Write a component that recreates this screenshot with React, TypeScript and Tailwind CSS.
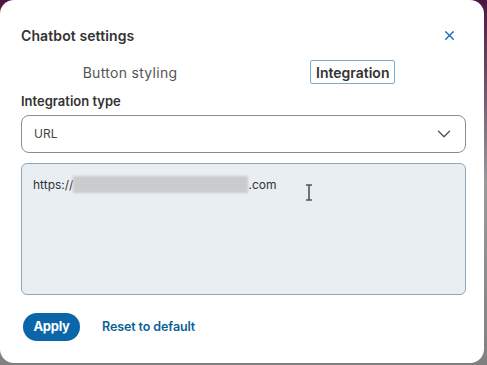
import { ChevronDown, X } from "lucide-react";

const App = () => {
  return (
    <div
      className="w-[487px] h-[365px] bg-gradient-to-b from-[#4b1442] via-[#9a9a9a] to-[#808080] overflow-hidden"
      style={{ fontFamily: "Inter, 'Liberation Sans', sans-serif" }}
    >
      <div className="w-[484px] h-[363px] rounded-[14px] bg-white pl-[21px] pr-[21px] pt-[26px] flex flex-col">
        {/* Header */}
        <div className="flex items-center justify-between h-[18px]">
          <h2 className="text-[14px] font-semibold text-[#333333] tracking-[0.1px]">Chatbot settings</h2>
          <X className="w-[15px] h-[15px] text-[#0a66c2] mr-[6px]" strokeWidth={2} />
        </div>

        {/* Tabs */}
        <div className="flex items-center mt-[16px] h-[24px]">
          <div className="w-[218px] flex justify-center">
            <span className="text-[14px] text-[#555555] tracking-[0.3px]">Button styling</span>
          </div>
          <div className="ml-[71px] h-[24px] px-[5px] border-[1.5px] border-[#7aaed0] rounded-[2px] flex items-center">
            <span className="text-[14px] font-semibold text-[#333333]">Integration</span>
          </div>
        </div>

        {/* Integration type */}
        <label className="mt-[9px] text-[13px] font-semibold text-[#333333] leading-[16px]">Integration type</label>
        <div className="mt-[6px] w-[445px] h-[38px] border border-[#8c8c8c] rounded-[8px] flex items-center justify-between pl-[12px] pr-[10px]">
          <span className="text-[12px] text-[#444444]">URL</span>
          <ChevronDown className="w-[22px] h-[22px] text-[#555555]" strokeWidth={1.5} />
        </div>

        {/* URL textarea */}
        <div className="mt-[10px] w-[445px] h-[132px] bg-[#e9eef3] border border-[#8fa6ba] rounded-[6px] pt-[12px] pl-[11px] relative">
          <div className="flex items-center text-[12px] text-[#333333] h-[17px]">
            <span>https://</span>
            <span className="inline-block w-[175px] h-[17px] bg-[#c9cbcd] blur-[1px]" />
            <span>.com</span>
          </div>
          {/* text cursor */}
          <svg className="absolute left-[283px] top-[20px]" width="8" height="17" viewBox="0 0 8 17">
            <path d="M1 1h6M4 1v15M1 16h6" stroke="#555555" strokeWidth="1.6" fill="none" />
          </svg>
        </div>

        {/* Actions */}
        <div className="mt-[18px] flex items-center">
          <button className="ml-[2px] h-[28px] w-[57px] rounded-full bg-[#0a66a8] text-white text-[13px] font-bold tracking-[-0.3px]">
            Apply
          </button>
          <button className="ml-[22px] text-[12.5px] font-semibold text-[#0b5f95] tracking-[-0.1px]">Reset to default</button>
        </div>
      </div>
    </div>
  );
};

export default App;
